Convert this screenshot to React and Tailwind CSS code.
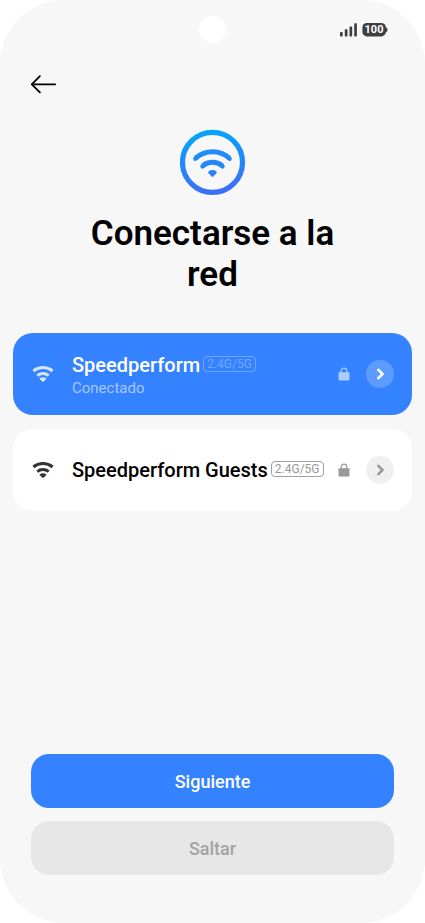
import { useState } from "react";

const initialNetworks = [
  { id: 1, name: "Speedperform", band: "2.4G/5G", connected: true },
  { id: 2, name: "Speedperform Guests", band: "2.4G/5G", connected: false },
];

function SignalIcon() {
  return (
    <svg width="17" height="14" viewBox="0 0 17 14" fill="#3f3f3f" aria-hidden="true">
      <rect x="0" y="9" width="2.7" height="4.4" rx="0.7" />
      <rect x="4.8" y="6.3" width="2.7" height="7.1" rx="0.7" />
      <rect x="9.5" y="3.4" width="2.7" height="10" rx="0.7" />
      <rect x="14.2" y="0.3" width="2.7" height="13.1" rx="0.7" />
    </svg>
  );
}

function BatteryIcon() {
  return (
    <svg width="26" height="14" viewBox="0 0 26 14" fill="#3f3f3f" role="img" aria-label="100">
      <rect x="0.4" y="0" width="23.4" height="13.4" rx="4.4" />
      <path d="M23 3.4Q25.6 4.8 25.6 6.7Q25.6 8.6 23 10Z" />
      <text x="12" y="10.4" textAnchor="middle" fontSize="11" fontWeight="700" fill="#fff">100</text>
    </svg>
  );
}

function ArrowIcon() {
  return (
    <svg width="26" height="20" viewBox="0 0 26 20" fill="none" stroke="#000" strokeWidth="1.8" aria-hidden="true">
      <path d="M2.2 10.3H25.2" strokeLinecap="round" />
      <path d="M9.9 2.2L1.8 10.3l8.1 8.1" strokeLinecap="round" strokeLinejoin="round" />
    </svg>
  );
}

function WifiBadge() {
  return (
    <svg width="66" height="66" viewBox="0 0 66 66" fill="none" aria-hidden="true">
      <defs>
        <linearGradient id="ring" x1="28" y1="0" x2="38" y2="66" gradientUnits="userSpaceOnUse">
          <stop offset="0" stopColor="#05a6fb" />
          <stop offset="1" stopColor="#3d6cf7" />
        </linearGradient>
      </defs>
      <circle cx="32.5" cy="33.4" r="30" stroke="url(#ring)" strokeWidth="5.2" />
      <path d="M15.6 29.2A25.5 25.5 0 0 1 49.4 29.2" stroke="#1e8cfb" strokeWidth="5" />
      <path d="M22.6 36.9A15.6 15.6 0 0 1 42.4 36.9" stroke="#2387fa" strokeWidth="5" />
      <path d="M15.4 29.7l.8-.7M49.6 29.7l-.8-.7M22.5 37.3l.8-.7M42.5 37.3l-.8-.7" stroke="#2089fa" strokeWidth="4.4" strokeLinecap="round" />
      <path d="M28.6 44.2Q27.6 42.8 29 42Q32.5 40.2 36 42Q37.4 42.8 36.4 44.2L33.6 47.3Q32.5 48.3 31.4 47.3Z" fill="#2c7ff9" />
    </svg>
  );
}

function WifiIcon({ className }) {
  return (
    <svg width="24" height="18" viewBox="0 0 24 18" fill="none" className={className} aria-hidden="true">
      <path d="M2.4 6A15.2 15.2 0 0 1 21.6 6" stroke="currentColor" strokeWidth="3" />
      <path d="M6.3 10.7A8.8 8.8 0 0 1 17.7 10.7" stroke="currentColor" strokeWidth="3" />
      <path d="M8.7 13.9Q8.3 13.4 9 13Q12 11.3 15 13Q15.7 13.4 15.3 13.9L12.8 16.5Q12 17.2 11.2 16.5Z" fill="currentColor" />
    </svg>
  );
}

function LockIcon({ className }) {
  return (
    <svg width="12" height="14" viewBox="0 0 12 14" className={className} aria-hidden="true">
      <path d="M3.2 6V4a2.8 2.8 0 0 1 5.6 0v2" fill="none" stroke="currentColor" strokeWidth="1.2" />
      <rect x="0.5" y="5.2" width="11" height="8.2" rx="1" fill="currentColor" />
    </svg>
  );
}

function ChevronIcon() {
  return (
    <svg width="10" height="12" viewBox="0 0 10 12" fill="none" stroke="currentColor" strokeWidth="2.6" strokeLinecap="round" strokeLinejoin="round" aria-hidden="true">
      <path d="M3.4 1.8L7.5 6L3.4 10.2" />
    </svg>
  );
}

function NetworkCard({ network, onSelect }) {
  const on = network.connected;
  return (
    <li className={`flex items-center h-[82px] rounded-[20px] px-[18px] ${on ? "bg-[#3482ff]" : "bg-white"}`}>
      <WifiIcon className={`shrink-0 ${on ? "text-[#d5e5ff]" : "text-[#333333]"}`} />
      <div className={`flex-1 min-w-0 ml-[17px] ${on ? "pt-1" : ""}`}>
        <div className="flex items-center gap-[3px]">
          <span className={`text-[20px] leading-6 font-medium whitespace-nowrap ${on ? "text-white" : "text-black"}`}>{network.name}</span>
          <span className={`shrink-0 flex items-center h-4 mb-[2px] px-[3px] border rounded-[4px] text-[12px] leading-none ${on ? "border-[#71a8ff] text-[#71a8ff]" : "border-[#a0a0a0] text-[#999999]"}`}>
            {network.band}
          </span>
        </div>
        {on && <p className="text-[15px] leading-[22px] text-[#a5c8ff]">Conectado</p>}
      </div>
      <LockIcon className={`shrink-0 ${on ? "text-[#aecdff]" : "text-[#999999]"}`} />
      <button
        type="button"
        aria-label={network.name}
        onClick={() => onSelect(network.id)}
        className={`shrink-0 ml-4 size-7 rounded-full flex items-center justify-center ${on ? "bg-[#5c9bff] text-white" : "bg-[#f0f0f0] text-[#9a9a9a]"}`}
      >
        <ChevronIcon />
      </button>
    </li>
  );
}

export default function App() {
  const [networks, setNetworks] = useState(initialNetworks);

  const selectNetwork = (id) => {
    setNetworks(networks.map(n => ({ ...n, connected: n.id === id })));
  };

  return (
    <div className="min-h-screen bg-white font-['Roboto',sans-serif]">
      <div className="min-h-screen flex flex-col bg-[#f7f7f7] rounded-[64px]">
        {/* Status bar */}
        <div className="grid grid-cols-3 items-center pt-4 px-[37px]">
          <span />
          <span className="justify-self-center size-[27px] rounded-full bg-white" />
          <div className="justify-self-end flex items-center gap-[5px]">
            <SignalIcon />
            <BatteryIcon />
          </div>
        </div>

        {/* Header */}
        <header className="px-[30px] pt-[31px]">
          <button type="button" aria-label="Atrás" className="block">
            <ArrowIcon />
          </button>
          <div className="flex justify-center mt-[35px]">
            <WifiBadge />
          </div>
          <h1 className="max-w-[280px] mx-auto mt-[18px] text-center text-[35px] leading-[41px] font-semibold text-black">
            Conectarse a la red
          </h1>
        </header>

        {/* Networks */}
        <ul className="flex flex-col gap-[14px] px-[13px] mt-[38px]">
          {networks.map(n => (
            <NetworkCard key={n.id} network={n} onSelect={selectNetwork} />
          ))}
        </ul>

        {/* Actions */}
        <div className="mt-auto flex flex-col gap-[13px] px-[31px] pt-8 pb-12">
          <button type="button" className="h-[54px] rounded-[18px] bg-[#3482ff] text-white text-[18px] font-medium">
            Siguiente
          </button>
          <button type="button" className="h-[54px] rounded-[18px] bg-[#e7e7e7] text-[#a3a3a3] text-[18px] font-medium">
            Saltar
          </button>
        </div>
      </div>
    </div>
  );
}
